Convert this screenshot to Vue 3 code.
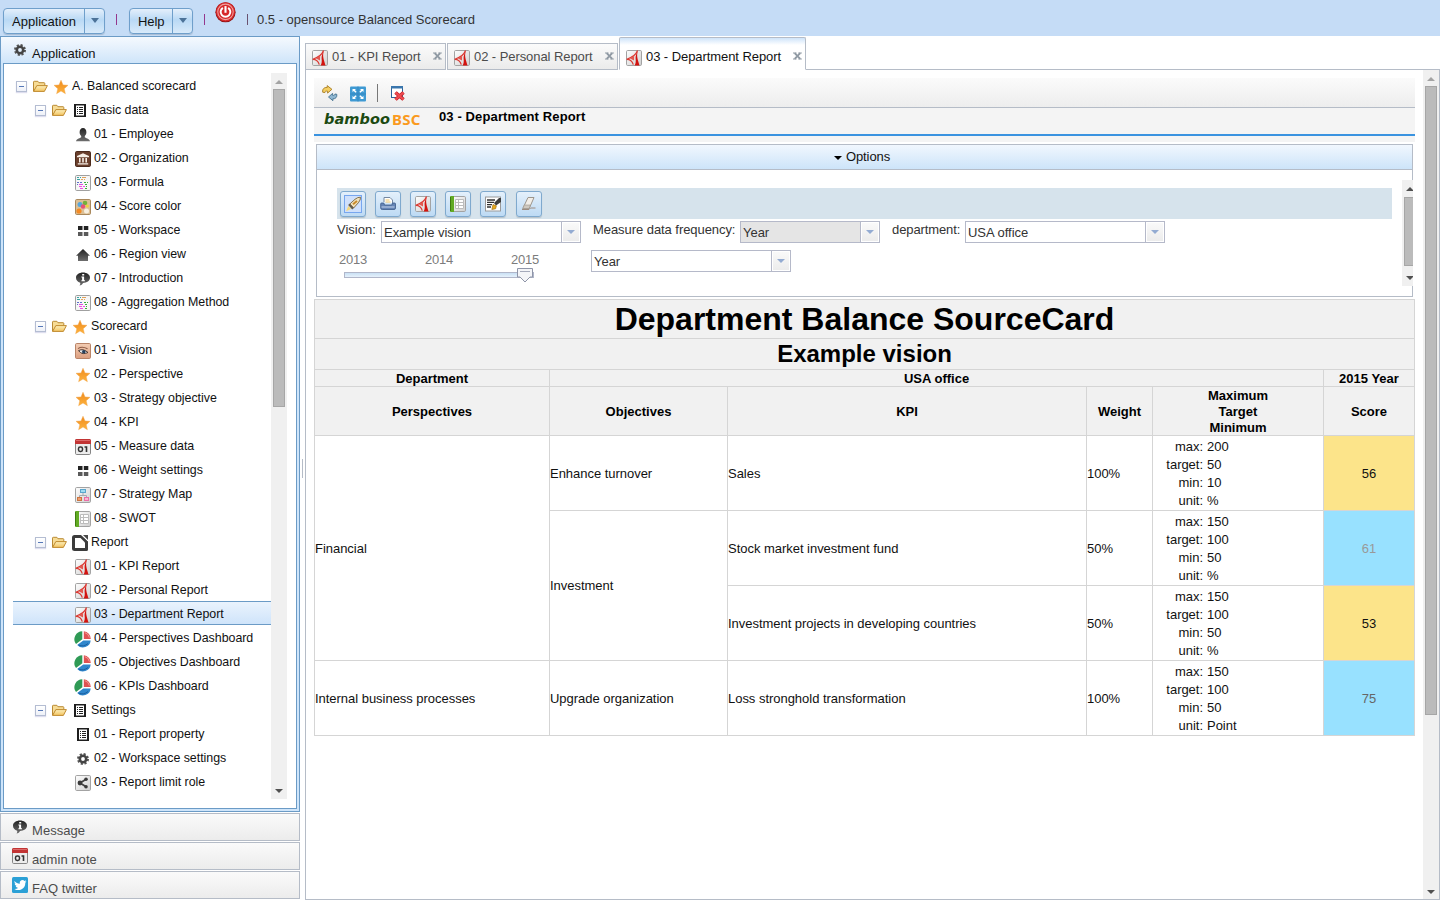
<script setup>
const star = '<path d="M8 1.2l2 4.7 5 .4-3.8 3.4 1.2 5L8 12l-4.4 2.7 1.2-5L1 6.3l5-.4z" fill="url(#g-orange)" stroke="#f0a040" stroke-width=".4"/>'
const frame = '<rect x=".5" y=".5" width="15" height="15" rx="1.2" fill="url(#g-frame)" stroke="#a3a3a3"/>'
const sheet = '<rect x=".5" y=".5" width="15" height="15" rx="1.2" fill="#f6f6f6" stroke="#a0a0a0"/>'

const icons = {
  star,
  folder:
    '<path d="M1.500 13.300V4.100q0-.8.8-.8h3.600l1 1.400h5.200q.7 0 .7.8v2" fill="#f7dc95" stroke="#b98a34"/><path d="M1.600 13.400L4.800 7.600h10.600l-3 5.800z" fill="url(#g-folder)" stroke="#c08a2e"/>',
  list:
    '<path d="M2 1h12v13H2z" fill="#1e1e1e"/><path d="M4 2.500h8v10H4z" fill="#fff"/><path d="M5 4.500h1M5 6.500h1M5 8.500h1M5 10.500h1M7 4.500h4M7 6.500h4M7 8.500h4M7 10.500h4" stroke="#222"/>',
  person:
    '<path d="M4.600 5.200C4.600 2.700 5.900 1 8 1s3.400 1.700 3.400 4.200c0 1.700-.8 3-1.600 3.800v1.200c.5.900 4.500 1.200 5.200 4H1c.7-2.800 4.700-3.100 5.200-4V9C5.400 8.200 4.600 6.900 4.600 5.200z" fill="url(#g-dark)"/>',
  bank:
    '<rect x=".5" y=".5" width="15" height="15" rx="1.2" fill="#6a3f2c" stroke="#4b2a1c"/><path d="M8 2.300L14 5v1.200H2V5zM4 7h1.600v4.500H4zM7.200 7h1.600v4.500H7.200zM10.400 7H12v4.500h-1.600zM2.800 12.300h10.400V13.600H2.800z" fill="#f7efe6"/>',
  formula:
    sheet +
    '<g fill="none" stroke-width="1"><path d="M2 2.500h2M5 2.500h1" stroke="#3ba3a0"/><path d="M7 2.500h4" stroke="#e0a25a"/><path d="M2 4.500h3" stroke="#3ba3a0"/><path d="M6 4.500h2M9 4.500h1" stroke="#e0a25a"/><path d="M2 7.500h2M5 7.500h2" stroke="#5f6fc8"/><path d="M9 7.500h2M12 7.500h1" stroke="#38b038"/><path d="M2 9.500h1" stroke="#5f6fc8"/><path d="M4 9.500h4" stroke="#e24be2"/><path d="M10 9.500h2" stroke="#38b038"/><path d="M4 11.500h3M8 11.500h2M5 13.500h3" stroke="#f04be8"/><path d="M11 11.500h1M10 13.500h2" stroke="#38b038"/></g>',
  palette:
    '<rect x=".5" y=".5" width="15" height="15" rx="1.200" fill="#dcc096" stroke="#a9885c"/><circle cx="5" cy="5.500" r="2.500" fill="#58a6dc"/><circle cx="10" cy="4" r="2.300" fill="#74b13c"/><circle cx="8" cy="7.500" r="2.200" fill="#e65078"/><circle cx="4" cy="12" r="2.600" fill="#f48a24"/><circle cx="12.300" cy="7" r="1.600" fill="#f0d23c"/><circle cx="11.500" cy="12" r="2.500" fill="#f7efe0"/>',
  blocks:
    '<path d="M3 3h4.500v4H3zM8.800 3h4.500v4H8.800z" fill="#222"/><path d="M3 9h4.500v4H3zM8.800 9h4.500v4H8.800z" fill="#5a5a5a"/>',
  home: '<path d="M8 2L15 8.800h-2V14H3V8.800H1z" fill="url(#g-dark)"/>',
  info:
    '<path d="M8 1.500c3.900 0 7 2.100 7 5.200s-3.100 5.200-7 5.200c-.3 1.200-1.800 2.300-3.600 2.500.8-.7 1-1.500.8-2.700C2.600 10.900 1 9.100 1 6.700c0-3.100 3.100-5.200 7-5.200z" fill="url(#g-dark)"/><path d="M7.200 3h2v1.600h-2zM6.400 5.400h2.700v3.800h.9v1.100H6.400V9.200h.7V6.500h-.7z" fill="#fff"/>',
  eye:
    '<rect x=".5" y=".5" width="15" height="15" rx="1.200" fill="url(#g-skin)" stroke="#b98468"/><path d="M3 5.600Q7 2.800 12.500 5.800" fill="none" stroke="#8d5c46" stroke-width="1.100"/><path d="M3.500 7.700q4.500-2.700 9.500 1.800-5 2.200-7.500 0z" fill="#e8edf2" stroke="#3d2a24" stroke-width=".9"/><circle cx="8.800" cy="8.800" r="1.800" fill="#27405c"/>',
  date:
    '<rect x=".5" y=".5" width="15" height="15" rx="1.200" fill="#ededed" stroke="#858585"/><path d="M0 5V1.500Q0 0 1.500 0h13Q16 0 16 1.500V5z" fill="#c23434"/><path d="M1 1.500h14" stroke="#dc6a6a"/><rect x="3.500" y="8" width="4" height="4.500" rx="1.700" fill="none" stroke="#333" stroke-width="1.500"/><path d="M9.500 8h2v5" fill="none" stroke="#333" stroke-width="1.600"/>',
  map:
    frame +
    '<path d="M8 6v2.500M4.500 10.500v-2h7v2" stroke="#a3abb2" fill="none"/><rect x="5.500" y="2.500" width="5" height="3" fill="#9fdcf2" stroke="#5aa6cc"/><rect x="2.500" y="10.500" width="4" height="3" fill="#f0a070" stroke="#cc7440"/><rect x="9.500" y="10.500" width="4" height="3" fill="#fbb6d2" stroke="#ea6ea8"/>',
  book:
    frame +
    '<path d="M1 0h3v16H1Q0 16 0 15V1Q0 0 1 0z" fill="#62ab24"/><path d="M.5 1v14" stroke="#3f7d10"/><path d="M5.500 3.500h8v9h-8zM5.500 6.500h8M5.500 9.500h8M8.500 3.500v9" fill="#fff" stroke="#bdbdbd"/>',
  report:
    '<path d="M2.500 0H9l7 6.500v8q0 1.500-1.500 1.500h-12Q0 16 0 14V2.500Q0 0 2.500 0z" fill="#3c3c3c"/><path d="M3 3h5.500L13 7.500V13H3z" fill="#fff"/><path d="M11 0h5v5z" fill="#4a4a4a"/><path d="M10 0l6 6" stroke="#fff"/>',
  pdf:
    frame +
    '<path d="M11.500.5C10.300 4 7.200 7.200.7 9.300 4 9.300 6.300 11 7.300 14.700" fill="none" stroke="#dc3a33" stroke-width="1.200"/><path d="M8.200 5.500L4 8.600 8 10.500z" fill="#e35850"/><path d="M12 .5c-1 2.800-1 5.200-.6 7.600.4 2.400 1.300 4.700 2.100 7.400H8.700c1.200-2.200 1.200-4.300.9-7C9.400 6.500 10.400 3.200 12 .5z" fill="#d3130f"/>',
  pie:
    '<path d="M7.300.2v8L1 13A8 8 0 0 1 7.300.2z" fill="#2f9a55"/><path d="M8.800.2A7.800 7.800 0 0 1 15.800 8H8.800z" fill="#e05252"/><path d="M8.300 9.500h7.400A7.800 7.800 0 0 1 2.200 13.900z" fill="#2f86cc"/><path d="M9.800 1.600a6.500 6.500 0 0 1 4.600 5" stroke="#f29a94" fill="none"/><path d="M3.500 14q5 2.400 9.500-1.500" stroke="#1b5f9f" fill="none"/>',
  gear:
    '<circle cx="8" cy="8" r="4.900" fill="none" stroke="#555" stroke-width="2.200" stroke-dasharray="2.100 1.748"/><circle cx="8" cy="8" r="3.200" fill="none" stroke="#444" stroke-width="2.600"/>',
  share:
    frame +
    '<path d="M11.500 4L5 8l6.500 4" fill="none" stroke="#444" stroke-width="1.800"/><circle cx="11" cy="4.300" r="1.800" fill="#3a3a3a"/><circle cx="5" cy="8" r="2.400" fill="#3a3a3a"/><circle cx="11" cy="11.800" r="1.800" fill="#3a3a3a"/>',
  twitter:
    '<rect width="16" height="16" rx="1.500" fill="#2ba0d6"/><path d="M2.500 4c1.500 1.800 3.200 2.600 5.300 2.700C7.300 4.300 9 3 10.500 3c.9 0 1.500.3 2 .9l1.600-.6-.8 1.400 1.200-.2-1.200 1.300c.2 4.300-3 7.300-6.700 7.300-1.600 0-3-.4-4.200-1.200 1.500.1 2.700-.3 3.600-1-1.200-.2-2-.8-2.300-1.800h1C3.400 8.700 2.700 7.800 2.700 6.600l1.100.3C2.600 6 2.200 5 2.500 4z" fill="#fff"/>',
  power:
    '<circle cx="8" cy="8.200" r="7.700" fill="#8d1416"/><circle cx="8" cy="7.900" r="7.300" fill="#d6292b"/><circle cx="8" cy="7.900" r="5.900" fill="none" stroke="#f0a09e" stroke-width=".8"/><path d="M6 4.800a3.700 3.700 0 1 0 4 0" fill="none" stroke="#fff" stroke-width="1.500"/><path d="M8 3.500V8.600" stroke="#fff" stroke-width="1.600"/>',
  refresh:
    '<path d="M.7 6.200C.2 3 2.200 1.200 5.200 1.500V-.4L9.900 3.300 5.600 7.100V5.200C3.800 4.900 3 5.200 2.900 6.600z" fill="#f5cf62" stroke="#a67a20" stroke-width=".9"/><path d="M14.800 8.300c.4 3-1.200 4.600-3.900 4.500v1.900L6.500 11l4.100-3.600v1.900c1.600.2 2.200-.1 2.300-1.300z" fill="#8fb7d2" stroke="#43718f" stroke-width=".9"/>',
  expand:
    '<rect width="16" height="15" y=".5" rx="1" fill="#3f9ad3"/><path d="M8 .5v15M0 8h16" stroke="#3587c0"/><path d="M2.500 3H6L4.900 4l1.700 1.700-1 1L3.700 5l-1.200 1zM13.500 3H10l1.100 1-1.700 1.700 1 1L12.300 5l1.200 1zM2.500 13H6l-1.100-1 1.700-1.700-1-1L3.700 11l-1.200-1zM13.500 13H10l1.100-1-1.700-1.700 1-1 1.900 1.700 1.200-1z" fill="#fff"/>',
  closewin:
    '<rect x="1.500" y=".5" width="11" height="11" fill="#fff" stroke="#2b6399"/><path d="M1 0h12v2.500H1z" fill="#3a76ad"/><path d="M5.500 6.500l8 7M13.500 6.500l-8 7" stroke="#c51f28" stroke-width="3.600"/><path d="M5.500 6.500l8 7M13.500 6.500l-8 7" stroke="#ee4b50" stroke-width="2.200"/>',
  rocket:
    '<rect x="-.5" y="-.5" width="17" height="17" fill="#cfe0fb" stroke="#77a6ef"/><path d="M4.800 8L10 3.300Q12.700 1 15.500 1.200q.2 2.800-2.200 5.600L8.600 12z" fill="#f1e2bd" stroke="#84714b"/><path d="M4.600 7.600L9 12 7.200 13.400 3.200 9z" fill="#665d4c"/><path d="M8 8.200L12 5" stroke="#c98a2a" stroke-width="2"/><path d="M3.300 10l2.800 3-5 2.300z" fill="#f7d878"/>',
  print:
    '<path d="M4 6V1.500h6L12.500 4v3" fill="#fff" stroke="#7588a0"/><path d="M5.500 4h4M5.500 6h5" stroke="#f0c564"/><path d="M1.500 7h2.300L4.500 9h7.300l.7-2H14.500q1 0 1 1v4q0 1.500-1.500 1.500H2.300Q.7 13.500.7 12V8q0-1 .8-1z" fill="#6585b6" stroke="#3b5988" stroke-width=".8"/><path d="M1.500 11h13" stroke="#a9bedd" stroke-width="1.400"/>',
  sign:
    '<rect x=".5" y="1" width="15" height="14" fill="#fff" stroke="#9a9a9a"/><path d="M2 4h8M2 6.300h7M2 8.600h5M2 11h4" stroke="#333" stroke-width="1.300"/><path d="M9 7l5-5h2v4l-5 3.500z" fill="#3d3d3d"/><path d="M6.800 13.500l1.200-5 3.400 1.300-.8 3z" fill="#e7a91f" stroke="#99690c" stroke-width=".6"/>',
  eraser:
    '<path d="M7 1.500h6L8.200 12.500H1.800z" fill="#f2eee8" stroke="#9c958c"/><path d="M3.300 9h6.200l-1.500 3.600H1.800z" fill="#cfc9c0" stroke="#9c958c" stroke-width=".6"/><path d="M1 13.500h7l1.500-1.500h5" stroke="#9d8c80" fill="none"/>',
}

const G = (text, icon) => ({ level: 1, text, icon })
const L = (text, icon, on) => ({ level: 2, text, icon, on })
const tree = [
  { level: 0, text: 'A. Balanced scorecard', icon: 'star' },
  G('Basic data', 'list'),
  L('01 - Employee', 'person'),
  L('02 - Organization', 'bank'),
  L('03 - Formula', 'formula'),
  L('04 - Score color', 'palette'),
  L('05 - Workspace', 'blocks'),
  L('06 - Region view', 'home'),
  L('07 - Introduction', 'info'),
  L('08 - Aggregation Method', 'formula'),
  G('Scorecard', 'star'),
  L('01 - Vision', 'eye'),
  L('02 - Perspective', 'star'),
  L('03 - Strategy objective', 'star'),
  L('04 - KPI', 'star'),
  L('05 - Measure data', 'date'),
  L('06 - Weight settings', 'blocks'),
  L('07 - Strategy Map', 'map'),
  L('08 - SWOT', 'book'),
  G('Report', 'report'),
  L('01 - KPI Report', 'pdf'),
  L('02 - Personal Report', 'pdf'),
  L('03 - Department Report', 'pdf', true),
  L('04 - Perspectives Dashboard', 'pie'),
  L('05 - Objectives Dashboard', 'pie'),
  L('06 - KPIs Dashboard', 'pie'),
  G('Settings', 'list'),
  L('01 - Report property', 'list'),
  L('02 - Workspace settings', 'gear'),
  L('03 - Report limit role', 'share'),
]
const panes = [
  { text: 'Message', icon: 'info' },
  { text: 'admin note', icon: 'date' },
  { text: 'FAQ twitter', icon: 'twitter' },
]
const tabs = [
  { text: '01 - KPI Report', cls: 'tab-a' },
  { text: '02 - Personal Report', cls: 'tab-b' },
  { text: '03 - Department Report', cls: 'tab-c active' },
]
const actions = ['rocket', 'print', 'pdf', 'book', 'sign', 'eraser']
const limits = (max, target, min, unit) => [['max:', max], ['target:', target], ['min:', min], ['unit:', unit]]
const cells = [
  { t: 'Financial', c: 'span3' },
  { t: 'Enhance turnover' }, { t: 'Sales' }, { t: '100%' }, { lim: limits(200, 50, 10, '%') }, { t: '56', c: 'score warm' },
  { t: 'Investment', c: 'span2' },
  { t: 'Stock market investment fund' }, { t: '50%' }, { lim: limits(150, 100, 50, '%') }, { t: '61', c: 'score cool faint' },
  { t: 'Investment projects in developing countries' }, { t: '50%' }, { lim: limits(150, 100, 50, '%') }, { t: '53', c: 'score warm' },
  { t: 'Internal business processes' }, { t: 'Upgrade organization' }, { t: 'Loss stronghold transformation' }, { t: '100%' },
  { lim: limits(150, 100, 50, 'Point') }, { t: '75', c: 'score cool dim' },
]
</script>

<template>
  <div class="app">
    <svg class="defs" width="0" height="0">
      <defs>
        <linearGradient id="g-orange" x2="0" y2="1"><stop stop-color="#ef8a1c" /><stop offset="1" stop-color="#fdb33f" /></linearGradient>
        <linearGradient id="g-folder" x2="0" y2="1"><stop stop-color="#fdf0bd" /><stop offset="1" stop-color="#f2c35f" /></linearGradient>
        <linearGradient id="g-frame" x2="1" y2="1"><stop stop-color="#fff" /><stop offset="1" stop-color="#cfcfcf" /></linearGradient>
        <linearGradient id="g-dark" x2="0" y2="1"><stop stop-color="#222" /><stop offset="1" stop-color="#6e6e6e" /></linearGradient>
        <linearGradient id="g-skin" x2="0" y2="1"><stop stop-color="#f3cdb4" /><stop offset="1" stop-color="#dc9f80" /></linearGradient>
      </defs>
    </svg>

    <header class="topbar">
      <div class="split app-btn"><span>Application</span><i><b class="tri"></b></i></div>
      <span class="bar"></span>
      <div class="split help-btn"><span>Help</span><i><b class="tri"></b></i></div>
      <span class="bar second"></span>
      <svg class="power" viewBox="0 0 16 16" v-html="icons.power"></svg>
      <span class="bar dark"></span>
      <span class="product">0.5 - opensource Balanced Scorecard</span>
    </header>

    <div class="body">
      <aside class="sidebar">
        <section class="open-pane">
          <h2 class="pane-title"><svg class="ic" viewBox="0 0 16 16" v-html="icons.gear"></svg><span>Application</span></h2>
          <div class="pane-box">
            <ul class="tree">
              <li v-for="(n, i) in tree" :key="i" :class="['node', 'lv' + n.level, { on: n.on }]">
                <template v-if="n.level < 2">
                  <span class="minus"></span>
                  <svg class="ic folder" viewBox="0 0 16 16" v-html="icons.folder"></svg>
                </template>
                <svg class="ic" viewBox="0 0 16 16" v-html="icons[n.icon]"></svg>
                <span class="label">{{ n.text }}</span>
              </li>
            </ul>
            <div class="sb tree-sb"><b class="up faded"></b><div class="thumb"></div><b class="down"></b></div>
          </div>
        </section>
        <div v-for="p in panes" :key="p.text" class="pane">
          <svg class="ic" viewBox="0 0 16 16" v-html="icons[p.icon]"></svg><span>{{ p.text }}</span>
        </div>
      </aside>

      <div class="splitter"><span></span></div>

      <main class="main">
        <nav class="tabs">
          <div v-for="t in tabs" :key="t.text" :class="['tab', t.cls]">
            <svg class="ic" viewBox="0 0 16 16" v-html="icons.pdf"></svg>
            <span class="tab-text">{{ t.text }}</span>
            <svg class="x" viewBox="0 0 9 8"><path d="M0 1h3.500M5.300 1h3.500M0 7h3.500M5.300 7h3.500" stroke="#8f99a3" stroke-width="1.200" /><path d="M1.700 1.200l5.500 5.600M7.200 1.200L1.700 6.800" stroke="#8f99a3" stroke-width="1.900" /></svg>
          </div>
          <div class="tab-rest"></div>
        </nav>

        <div class="content">
          <div class="page">
            <div class="toolbar">
              <svg class="ic" viewBox="0 0 16 16" v-html="icons.refresh"></svg>
              <svg class="ic t2" viewBox="0 0 16 16" v-html="icons.expand"></svg>
              <span class="sep"></span>
              <svg class="ic" viewBox="0 0 16 16" v-html="icons.closewin"></svg>
            </div>
            <div class="titlebar">
              <span class="logo"><em>bamboo</em><strong>BSC</strong></span>
              <h1>03 - Department Report</h1>
            </div>
            <div class="strip"></div>

            <section class="options">
              <div class="opt-head"><b></b><span>Options</span></div>
              <div class="opt-body">
                <div class="actions">
                  <button v-for="a in actions" :key="a" :class="a"><svg class="ic" viewBox="0 0 16 16" v-html="icons[a]"></svg></button>
                </div>
                <div class="line one">
                  <label class="l1">Vision:</label>
                  <div class="combo"><span>Example vision</span><i><b></b></i></div>
                  <label class="l2">Measure data frequency:</label>
                  <div class="combo short off"><span>Year</span><i><b></b></i></div>
                  <label class="l3">department:</label>
                  <div class="combo"><span>USA office</span><i><b></b></i></div>
                </div>
                <div class="line two">
                  <div class="slider">
                    <div class="years"><span>2013</span><span>2014</span><span>2015</span></div>
                    <div class="track">
                      <svg class="handle" viewBox="0 0 16 15"><path d="M.5.500h15v8.500H13L8 14 3 9H.5z" fill="#f4f5f8" stroke="#8f95a8" /><path d="M3 3.500h10" stroke="#a5aabb" /></svg>
                    </div>
                  </div>
                  <div class="combo"><span>Year</span><i><b></b></i></div>
                </div>
              </div>
              <div class="sb opt-sb"><b class="up"></b><div class="thumb"></div><b class="down"></b></div>
            </section>

            <div class="grid">
              <div class="hd h-title">Department Balance SourceCard</div>
              <div class="hd h-sub">Example vision</div>
              <div class="hd">Department</div>
              <div class="hd span-office">USA office</div>
              <div class="hd">2015 Year</div>
              <div class="hd">Perspectives</div>
              <div class="hd">Objectives</div>
              <div class="hd">KPI</div>
              <div class="hd">Weight</div>
              <div class="hd">Maximum<br />Target<br />Minimum</div>
              <div class="hd">Score</div>
              <div v-for="(c, i) in cells" :key="i" :class="['cell', c.c]">
                <dl v-if="c.lim">
                  <template v-for="[k, v] in c.lim" :key="k"><dt>{{ k }}</dt><dd>{{ v }}</dd></template>
                </dl>
                <template v-else>{{ c.t }}</template>
              </div>
            </div>
          </div>
          <div class="sb page-sb"><b class="up faded"></b><div class="thumb"></div><b class="down"></b></div>
        </div>
      </main>
    </div>
  </div>
</template>

<style>
body { margin: 0; background: #fff; overflow: hidden; }
</style>

<style scoped>
.app { width: 1440px; height: 900px; display: flex; flex-direction: column; font: 13px/16px "Liberation Sans", Arial, sans-serif; color: #131313; overflow: hidden; }
.app * { box-sizing: border-box; }
.defs { position: absolute; }
.ic { width: 16px; height: 16px; flex: none; display: block; overflow: visible; }
h1, h2, ul, dl, dd { margin: 0; padding: 0; font-weight: normal; }

.topbar { height: 36px; flex: none; background: #c5dcf6; display: flex; padding-left: 3px; }
.split { height: 26px; margin-top: 8px; border: 1px solid #6f9fcb; border-radius: 4px; display: flex; background: linear-gradient(#e4effb, #b9d9f5 45%, #d8eafa); box-shadow: 0 1px 1px rgba(0,0,0,.15); line-height: 26px; }
.split span { padding-left: 8px; flex: 1; letter-spacing: .03px; }
.split i { width: 20px; border-left: 1px solid #6f9fcb; display: flex; justify-content: center; padding-top: 9px; }
.app-btn { width: 102px; }
.help-btn { width: 64px; }
.help-btn span { letter-spacing: -.05px; }
.tri { width: 0; height: 0; border: 4.5px solid transparent; border-top: 5px solid #4c7298; border-bottom: 0; }
.bar { width: 1px; height: 11px; margin: 14px 12px 0 11px; background: #94378d; }
.bar.second { margin-right: 10px; margin-left: 11px; }
.bar.dark { background: #6a5270; margin: 14px 9px 0 11px; }
.power { width: 21px; height: 22px; margin-top: 1px; }
.product { line-height: 16px; margin-top: 12px; color: #333; letter-spacing: -.01px; }

.body { flex: 1; display: flex; min-height: 0; }
.sidebar { width: 300px; display: flex; flex-direction: column; gap: 1px; flex: none; }
.open-pane { height: 776px; border: 1px solid #6b9bc6; background: #cfe5fa; padding: 0 2px 2px; }
.pane-title { height: 26px; margin: 0 -2px; background: linear-gradient(#f5f9fe, #cfe5fa); display: flex; padding: 5px 0 0 11px; font-size: 13px; }
.pane-title span { margin: 4px 0 0 4px; }
.pane-box { height: 746px; border: 1px solid #6b9bc6; background: #fff; padding: 9px; display: flex; }
.tree { width: 258px; list-style: none; height: 726px; overflow: hidden; }
.node { height: 24px; display: flex; font-size: 12.4px; color: #111; padding-top: 6px; letter-spacing: -.02px; }
.node .label { margin: -1px 0 0 3px; line-height: 16px; white-space: nowrap; }
.lv0 { padding-left: 3px; }
.lv1 { padding-left: 22px; }
.lv2 { padding-left: 62px; }
.minus { width: 11px; height: 11px; margin: 2px 5px 0 0; border: 1px solid #b4bdd2; background: linear-gradient(#fff, #eef1f8); display: flex; align-items: center; justify-content: center; box-shadow: 0 1px 1px #dde; }
.minus::before { content: ""; width: 5px; height: 1px; background: #5678b8; }
.folder { margin-right: 5px; margin-top: -1px; }
.node.on { background: linear-gradient(#eaf3fd, #cfe4fa); border-top: 1px solid #6b9bc6; border-bottom: 1px solid #6b9bc6; padding-top: 5px; }
.pane { height: 28px; border: 1px solid #b5bcc7; background: linear-gradient(#fafafa, #ececec); display: flex; padding: 5px 0 0 11px; color: #4c4c4c; }
.pane span { margin: 4px 0 0 4px; letter-spacing: .05px; }

.sb { background: #f0f0f0; width: 16px; flex: none; position: relative; }
.sb b { position: absolute; left: 4px; width: 0; height: 0; border: 4px solid transparent; }
.sb .up { border-bottom-color: #505050; border-top: 0; top: 7px; }
.sb .down { border-top-color: #505050; border-bottom: 0; bottom: 6px; }
.sb .up.faded { border-bottom-color: #a3a3a3; }
.thumb { margin: 0 2px; background: #bbb; border: 1px solid #a6a6a6; }
.tree-sb { height: 726px; padding-top: 16px; }
.tree-sb .thumb { height: 318px; }

.splitter { width: 5px; flex: none; display: flex; align-items: center; justify-content: center; }
.splitter span { width: 1px; height: 19px; background: #b5bcc7; }

.main { flex: 1; display: flex; flex-direction: column; }
.tabs { height: 34px; flex: none; display: flex; align-items: flex-end; }
.tab { height: 27px; border: 1px solid #b5bcc7; background: linear-gradient(#fbfbfb, #ebebeb); display: flex; padding: 6px 0 0 6px; color: #4c4c4c; }
.tab-text { margin: -1px 0 0 4px; letter-spacing: -.07px; white-space: nowrap; }
.tab .x { width: 9px; height: 8px; margin-left: auto; margin-right: 3px; margin-top: 2px; }
.tab-a { width: 141px; margin-right: 1px; }
.tab-b { width: 171px; margin-right: 1px; }
.tab-c { width: 187px; }
.tab.active { height: 33px; background: linear-gradient(#cfe4fa, #fff 7px); border-bottom-color: #fff; color: #111; padding-top: 12px; border-radius: 2px 2px 0 0; }
.tab-rest { flex: 1; height: 1px; background: #b5bcc7; }

.content { flex: 1; border: 1px solid #b5bcc7; border-top: 0; display: flex; justify-content: space-between; }
.page { width: 1101px; margin: 8px 0 0 8px; }
.toolbar { height: 30px; background: linear-gradient(#fbfbfb, #ededed); border-bottom: 1px solid #b5bcc7; display: flex; padding: 8px 0 0 8px; }
.t2 { margin-left: 12px; }
.sep { width: 1px; height: 18px; margin: -2px 12px 0 11px; background: #777; }
.titlebar { height: 28px; background: #f4f4f4; border-bottom: 2px solid #3a93e0; display: flex; }
.logo { width: 125px; padding: 3px 0 0 10px; display: flex; line-height: 17px; }
.logo em { font: italic bold 14.5px/17px "DejaVu Sans", sans-serif; color: #1c4a12; width: 68px; letter-spacing: .1px; }
.logo strong { font: bold 15px/17px "Noto Sans", sans-serif; color: #fa9a1e; letter-spacing: .2px; }
.titlebar h1 { font-size: 13px; font-weight: bold; margin-top: 1px; color: #000; letter-spacing: .12px; }
.strip { height: 6px; background: #f4f4f4; }

.options { width: 1097px; height: 153px; margin: 2px 0 2px 2px; border: 1px solid #b5bcc7; position: relative; }
.opt-head { height: 25px; background: linear-gradient(#f1f7fe, #cde4f9); border-bottom: 1px solid #b5bcc7; display: flex; justify-content: center; line-height: 23px; letter-spacing: -.1px; padding-right: 4px; }
.opt-head b { width: 0; height: 0; border: 4px solid transparent; border-top-color: #000; border-bottom: 0; margin: 11px 4px 0 -1px; }
.opt-body { padding: 18px 0 0 20px; color: #333; }
.actions { width: 1055px; height: 31px; background: #d6e3ec; display: flex; gap: 9px; padding: 3px 0 0 3px; }
.actions button { width: 26px; height: 26px; padding: 4px; border: 1px solid #7fa9ce; border-radius: 3px; background: linear-gradient(#e4f0fb, #bddaf4); box-shadow: 0 1px 1px rgba(0,0,0,.15); }
.actions .eraser { margin-left: 1px; }
.line { display: flex; }
.one { padding-top: 2px; }
.two { padding-top: 7px; }
.line label { line-height: 18px; white-space: nowrap; }
.l1 { width: 44px; }
.l2 { width: 147px; margin-left: 12px; letter-spacing: -.06px; }
.l3 { width: 73px; margin-left: 12px; letter-spacing: -.1px; }
.combo { width: 200px; height: 22px; border: 1px solid #b5b9c9; display: flex; background: #fff; line-height: 21px; }
.combo span { flex: 1; padding-left: 2px; letter-spacing: -.03px; }
.combo i { width: 19px; border-left: 1px solid #b5b9c9; background: linear-gradient(#fafafa, #ebebeb) padding-box; box-shadow: inset 0 0 0 1px #fff; display: flex; justify-content: center; padding-top: 8px; }
.combo b { width: 0; height: 0; border: 4px solid transparent; border-top-color: #93abd2; border-bottom: 0; }
.short { width: 140px; }
.off { background: #e5e5e5; }
.slider { width: 254px; }
.years { display: flex; padding: 2px 0 0 2px; color: #7c7c7c; }
.years span { width: 86px; flex: none; letter-spacing: -.2px; }
.track { margin: 4px 0 0 7px; width: 190px; height: 6px; border: 1px solid #b0b6c9; background: linear-gradient(#c8e0f4, #e6f1fb); position: relative; }
.handle { position: absolute; width: 16px; height: 15px; left: 172px; top: -5px; }
.opt-sb { position: absolute; left: 1085px; top: 35px; width: 11px; height: 106px; padding-top: 17px; overflow: hidden; }
.opt-sb .thumb { height: 69px; margin-right: 0; border-right: 0; }
.page-sb { height: 829px; padding-top: 16px; }
.page-sb .thumb { height: 629px; }
.page-sb .down { bottom: 5px; }

.grid { display: grid; grid-template-columns: 234px 177px 358px 65px 170px 90px; grid-template-rows: 38px 30px 16px 48px repeat(4, 74px); gap: 1px; padding: 1px; background: #d5d5d5; color: #111; letter-spacing: -.03px; }
.hd { background: #f1f1f1; font-weight: bold; display: flex; align-items: center; justify-content: center; text-align: center; color: #000; padding-top: 2px; white-space: nowrap; letter-spacing: 0; }
.h-title { grid-column: 1 / -1; font-size: 32px; padding: 0; }
.h-sub { grid-column: 1 / -1; font-size: 24px; padding: 0; }
.span-office { grid-column: span 4; }
.cell { background: #fff; display: flex; align-items: center; padding-top: 1px; white-space: nowrap; }
.span3 { grid-row: span 3; }
.span2 { grid-row: span 2; }
.score { justify-content: center; }
.warm { background: #fce48a; }
.cool { background: #98e1ff; }
.faint { color: #999; }
.dim { color: #666; }
dl { display: grid; grid-template-columns: 50px 1fr; column-gap: 4px; line-height: 18px; margin-top: 1px; }
dt { text-align: right; }
</style>
